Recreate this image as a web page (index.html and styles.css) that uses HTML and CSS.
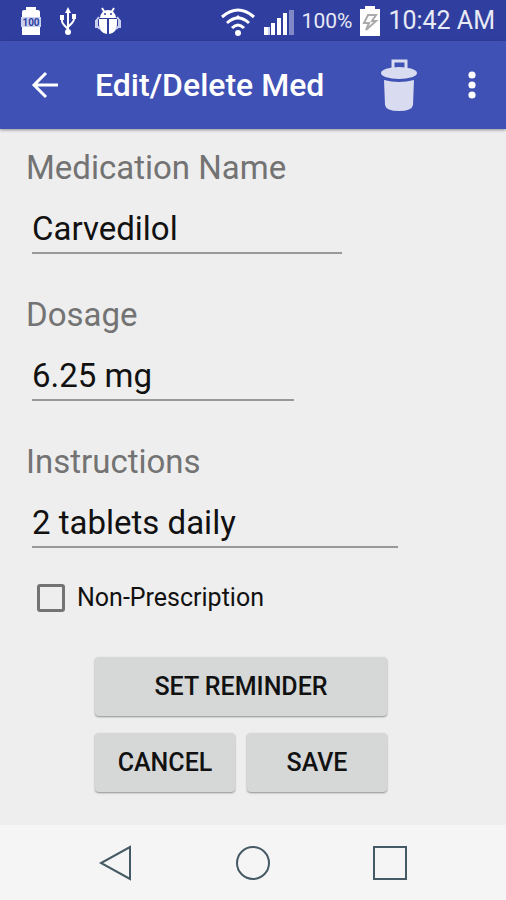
FILE: index.html
```
<!DOCTYPE html>
<html lang="en">
<head>
    <meta charset="UTF-8">
    <meta name="viewport" content="width=device-width, initial-scale=1">
    <title>Edit/Delete Med</title>
    <link rel="stylesheet" href="styles.css">
</head>
<body>
    <div class="statusbar">
        <div class="notifications">
            <svg width="20" height="30" viewBox="0 0 20 30">
                <path fill="#fff" d="M5 1h10v3h2q2 0 2 2v5H1V6q0-2 2-2h2zM1 21h18v8H1z"/>
                <path fill="#c9cfee" d="M0 11h20v10H0z"/>
                <text x="10" y="20" class="level">100</text>
            </svg>
            <svg width="16" height="30" viewBox="0 0 16 30">
                <g fill="none" stroke="#fff" stroke-width="2">
                    <path d="M8 5v20M8 23l-4-4q-2-2-2-4v-4M8 21l4-4q2-2 2-4V9"/>
                </g>
                <path fill="#fff" d="M8 1l3 6H5zM0 9h4v5H0zM12 8h4v5h-4z"/>
                <circle cx="8" cy="26" r="3" fill="#fff"/>
            </svg>
            <svg width="26" height="30" viewBox="0 0 26 30">
                <path fill="none" stroke="#fff" stroke-width="2" d="M7 2l3 5M19 2l-3 5"/>
                <path fill="#fff" d="M5 12q1-8 8-8t8 8zM4 13h8v15q-8-1-8-10zM14 13h8v5q0 9-8 10z"/>
                <path fill="#c9cfee" d="M0 14h3v8H0zM23 14h3v8h-3z"/>
                <path fill="none" stroke="#c9cfee" stroke-width="2" d="M1 15l3-4M25 15l-3-4M2 20l3 3M24 20l-3 3"/>
                <circle cx="10" cy="8" r="1" fill="#303f9f"/>
                <circle cx="16" cy="8" r="1" fill="#303f9f"/>
            </svg>
        </div>
        <div class="system">
            <svg width="36" height="30" viewBox="0 0 36 30">
                <g fill="none" stroke="#fff" stroke-width="3">
                    <path d="M2 11q16-14 32 0M7 17q11-10 22 0M12 22q6-6 12 0"/>
                </g>
                <path fill="#fff" d="M18 9l4 4h-8z"/>
                <circle cx="18" cy="27" r="3" fill="#fff"/>
            </svg>
            <svg width="30" height="30" viewBox="0 0 30 30">
                <path fill="#fff" d="M0 21h4v8H0zM7 17h4v12H7zM13 12h4v17h-4zM19 7h4v22h-4z"/>
                <path fill="#c9cfee" d="M4 21h2v8H4z"/>
                <path fill="#8089c6" d="M25 4h5v25h-5z"/>
            </svg>
            <span class="percent">100%</span>
            <svg width="20" height="32" viewBox="0 0 20 32">
                <path fill="#fff" d="M5 1h10v3h5v27H0V4h5z"/>
                <path fill="none" stroke="#aaa" stroke-width="2" d="M8 10h8l-4 6h4L6 25l3-7H4z"/>
            </svg>
            <span class="clock">10:42 AM</span>
        </div>
    </div>

    <header class="toolbar">
        <button type="button" class="icon" aria-label="Back">
            <svg width="28" height="28" viewBox="0 0 28 28">
                <path fill="none" stroke="#fff" stroke-width="3" d="M27 14H3M15 2L3 14l12 12"/>
            </svg>
        </button>
        <h1>Edit/Delete Med</h1>
        <button type="button" class="icon delete" aria-label="Delete">
            <svg width="38" height="54" viewBox="0 0 38 54">
                <path fill="none" stroke="#d9dcf0" stroke-width="3" d="M13 11V3h13v8"/>
                <ellipse cx="19" cy="15" rx="18" ry="6" fill="#d9dcf0"/>
                <path fill="#d9dcf0" d="M4 22q15 4 30 0l-1 25q-1 6-14 6T5 47z"/>
            </svg>
        </button>
        <button type="button" class="icon" aria-label="More options">
            <svg width="8" height="28" viewBox="0 0 8 28">
                <g fill="#fff">
                    <circle cx="4" cy="4" r="3.6"/>
                    <circle cx="4" cy="14" r="3.6"/>
                    <circle cx="4" cy="24" r="3.6"/>
                </g>
            </svg>
        </button>
    </header>

    <main>
        <form class="med">
            <div class="field">
                <label for="name">Medication Name</label>
                <input type="text" id="name" class="text name" value="Carvedilol">
            </div>
            <div class="field">
                <label for="dosage">Dosage</label>
                <input type="text" id="dosage" class="text dosage" value="6.25 mg">
            </div>
            <div class="field">
                <label for="instructions">Instructions</label>
                <input type="text" id="instructions" class="text instructions" value="2 tablets daily">
            </div>
            <div class="check">
                <input type="checkbox" id="otc">
                <label for="otc">Non-Prescription</label>
            </div>
            <div class="actions">
                <button type="button" class="button wide">SET REMINDER</button>
                <button type="button" class="button">CANCEL</button>
                <button type="submit" class="button">SAVE</button>
            </div>
        </form>
    </main>

    <nav class="navbar">
        <button type="button" aria-label="Back">
            <svg width="36" height="36" viewBox="0 0 36 36">
                <path d="M32 2v32L3 18z"/>
            </svg>
        </button>
        <button type="button" aria-label="Home">
            <svg width="36" height="36" viewBox="0 0 36 36">
                <circle cx="18" cy="18" r="16"/>
            </svg>
        </button>
        <button type="button" aria-label="Recent apps">
            <svg width="36" height="36" viewBox="0 0 36 36">
                <path d="M2 2h32v32H2z"/>
            </svg>
        </button>
    </nav>
</body>
</html>
```

FILE: styles.css
```
* {
    box-sizing: border-box;
}

body {
    display: flex;
    flex-direction: column;
    min-height: 100vh;
    margin: 0;
    background: #eee;
    color: #111;
    font-family: Roboto, sans-serif;
}

button {
    padding: 0;
    border: none;
    background: none;
    font-family: inherit;
    cursor: pointer;
}

svg {
    display: block;
}

/* Status bar */
.statusbar {
    display: flex;
    justify-content: space-between;
    align-items: center;
    height: 41px;
    padding: 0 11px 0 21px;
    background: #303f9f;
    color: #e8eaf6;
}

.notifications {
    display: flex;
    gap: 19px;
}

.system {
    display: flex;
    align-items: center;
    gap: 8px;
}

.level {
    fill: #303f9f;
    font-size: 10px;
    font-weight: 700;
    text-anchor: middle;
}

.percent {
    font-size: 21px;
}

.clock {
    font-size: 25px;
}

/* Toolbar */
.toolbar {
    display: flex;
    align-items: center;
    height: 88px;
    padding: 0 30px 0 31px;
    background: #3f51b5;
    box-shadow: 0 1px 3px rgba(0, 0, 0, 0.4);
}

.toolbar h1 {
    flex: 1;
    margin: 0 0 0 36px;
    color: #fff;
    font-size: 32px;
    font-weight: 500;
}

.delete {
    margin-right: 50px;
}

/* Form */
main {
    flex: 1;
    padding: 19px 50px 32px 26px;
}

.field {
    margin-bottom: 41px;
}

.field label {
    display: block;
    color: #737373;
    font-size: 33px;
    line-height: 40px;
}

.text {
    display: block;
    height: 50px;
    margin: 16px 0 0 6px;
    padding: 0;
    border: none;
    border-bottom: 2px solid #999;
    border-radius: 0;
    background: none;
    color: #111;
    font-family: inherit;
    font-size: 33px;
    outline: none;
}

.name {
    width: 72%;
}

.dosage {
    width: 61%;
}

.instructions {
    width: 85%;
}

.check {
    display: flex;
    align-items: center;
    gap: 12px;
    margin: -7px 0 0 11px;
    font-size: 25px;
    line-height: 32px;
}

.check input {
    appearance: none;
    width: 28px;
    height: 28px;
    margin: 0;
    border: 3px solid #737373;
    border-radius: 3px;
}

.check input:checked {
    background: #3f51b5;
}

.actions {
    display: grid;
    grid-template-columns: 140px 140px;
    justify-content: center;
    gap: 17px 12px;
    margin-top: 43px;
}

.button {
    height: 59px;
    border-radius: 4px;
    background: #d6d7d7;
    box-shadow: 0 1px 2px rgba(0, 0, 0, 0.4);
    color: #111;
    font-size: 25px;
    font-weight: 500;
}

.wide {
    grid-column: 1 / 3;
}

/* Navigation bar */
.navbar {
    display: flex;
    justify-content: center;
    align-items: center;
    height: 75px;
    background: #f5f5f5;
}

.navbar button {
    display: flex;
    justify-content: center;
    width: 27%;
}

.navbar svg {
    fill: none;
    stroke: #455a64;
    stroke-width: 2;
}
```
